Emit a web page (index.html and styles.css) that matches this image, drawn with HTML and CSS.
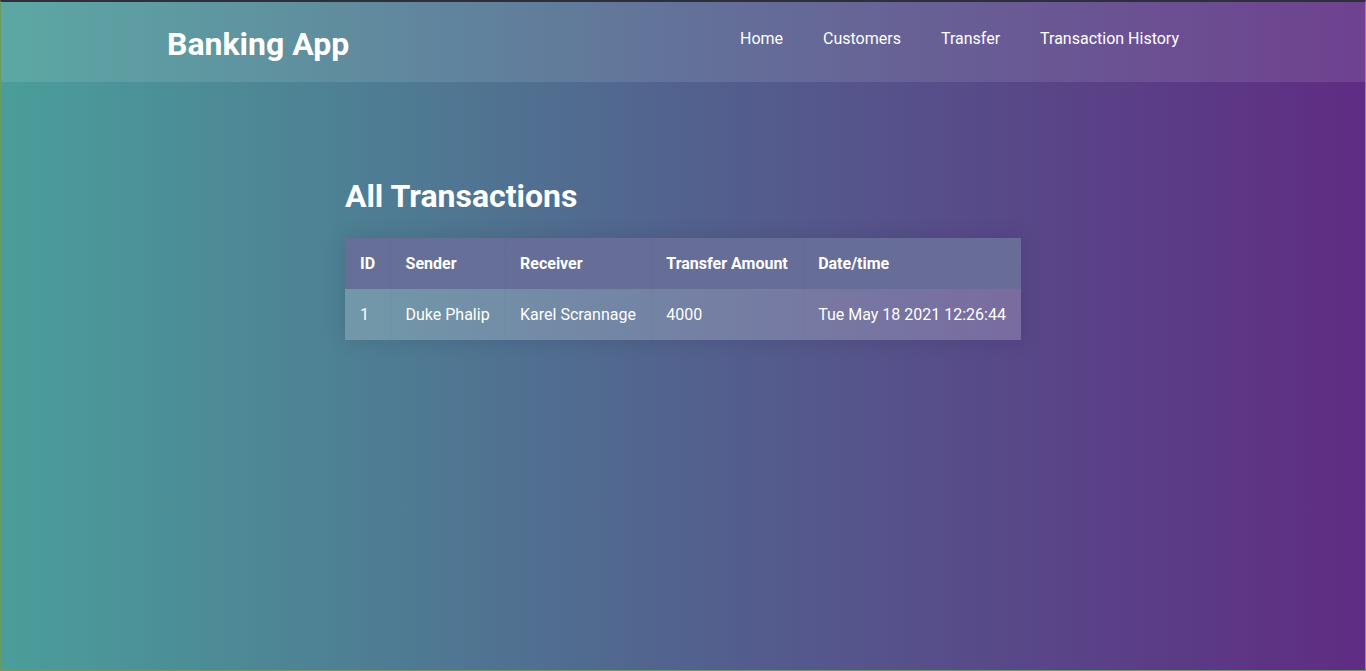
FILE: index.html
```html
<!DOCTYPE html>
<html lang="en">
<head>
<meta charset="utf-8">
<title>Banking App - Transaction History</title>
<link rel="stylesheet" href="styles.css">
</head>
<body>
<div class="frame">
  <header class="topbar">
    <div class="brand">Banking App</div>
    <nav class="nav">
      <a href="#">Home</a>
      <a href="#">Customers</a>
      <a href="#">Transfer</a>
      <a href="#">Transaction History</a>
    </nav>
  </header>
  <main class="content">
    <section class="panel">
      <h1 class="title">All Transactions</h1>
      <table class="tx">
        <thead>
          <tr><th>ID</th><th>Sender</th><th>Receiver</th><th>Transfer Amount</th><th>Date/time</th></tr>
        </thead>
        <tbody>
          <tr><td>1</td><td>Duke Phalip</td><td>Karel Scrannage</td><td>4000</td><td>Tue May 18 2021 12:26:44</td></tr>
        </tbody>
      </table>
    </section>
  </main>
</div>
</body>
</html>
```
FILE: styles.css
```css
* { box-sizing: border-box; }
html, body { margin: 0; padding: 0; height: 100%; }
body {
  font-family: Roboto, "Liberation Sans", sans-serif;
  color: #fff;
}
.frame {
  height: 100vh;
  border-top: 2px solid #2d303b;
  border-left: 1px solid #6d9a5f;
  border-right: 1px solid #7e9a80;
  border-bottom: 1px solid #6d9a5f;
  background: linear-gradient(to right, #4a9e9a 0%, #52628e 50%, #5f2c83 100%);
  display: flex;
  flex-direction: column;
}
.topbar {
  height: 80px;
  background: rgba(255, 255, 255, 0.1);
  display: flex;
  align-items: center;
  justify-content: space-between;
  padding: 0 166px;
}
.brand {
  font-size: 32px;
  font-weight: 700;
  line-height: 1;
  margin-top: 4px;
}
.nav {
  display: flex;
  margin-bottom: 6px;
}
.nav a {
  color: #fff;
  text-decoration: none;
  font-size: 16px;
  padding: 0 20px;
  line-height: 20px;
}
.content {
  flex: 1;
  display: flex;
  justify-content: center;
  padding-top: 96px;
}
.panel { width: max-content; }
.title {
  margin: 0 0 24px;
  font-size: 32px;
  font-weight: 700;
  line-height: 36px;
}
.tx {
  border-collapse: collapse;
  box-shadow: 0 0 20px rgba(0, 0, 0, 0.12);
  font-size: 16px;
}
.tx th, .tx td {
  padding: 0 15.2px;
  height: 51px;
  text-align: left;
  white-space: nowrap;
  box-shadow: inset 1px 0 0 rgba(0, 0, 0, 0.03);
}
.tx th:first-child, .tx td:first-child { box-shadow: none; }
.tx thead tr { background: rgba(103, 110, 152, 0.97); }
.tx th { font-weight: 700; }
.tx tbody tr { background: rgba(255, 255, 255, 0.2); }
.tx td { font-weight: 400; }
```
